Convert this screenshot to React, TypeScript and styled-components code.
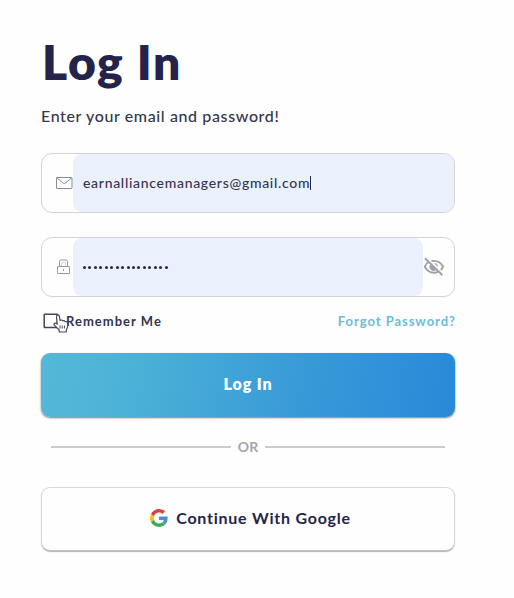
import React from "react";
import styled, { createGlobalStyle } from "styled-components";

const GlobalStyle = createGlobalStyle`
  * { box-sizing: border-box; }
  body { margin: 0; background: #fefefe; }
`;

const Page = styled.main`
  width: 514px;
  height: 598px;
  padding: 38px 59px 0 41px;
  display: flex;
  flex-direction: column;
  overflow: hidden;
  background: #fefefe;
  color: #34364c;
  font-family: Lato, "Open Sans", sans-serif;
`;

const Title = styled.h1`
  margin: 0;
  height: 54px;
  padding-left: 1px;
  font-size: 48px;
  line-height: 48px;
  font-weight: 800;
  letter-spacing: 1.5px;
  color: #24244a;
  white-space: nowrap;
`;

const Subtitle = styled.p`
  margin: 12px 0 0;
  height: 24px;
  font-size: 16px;
  line-height: 23px;
  font-weight: 500;
  letter-spacing: 0.62px;
  white-space: nowrap;
`;

const Field = styled.label<{ $top: number }>`
  flex: none;
  margin-top: ${(p) => p.$top}px;
  height: 60px;
  display: flex;
  align-items: stretch;
  border: 1px solid #d3d3da;
  border-radius: 11px;
  overflow: hidden;
  background: #fefefe;
`;

const LeadingIcon = styled.span`
  width: 31px;
  flex: none;
  display: flex;
  align-items: center;
  padding-left: 13px;
`;

const TrailingIcon = styled.span`
  width: 31px;
  flex: none;
  display: flex;
  align-items: center;
`;

const FieldValue = styled.span<{ $radius: string }>`
  flex: 1;
  display: flex;
  align-items: center;
  padding: 0 0 1px 10px;
  background: #eaf1fd;
  border-radius: ${(p) => p.$radius};
  font-size: 14px;
  font-weight: 500;
  letter-spacing: 0.7px;
  white-space: nowrap;
`;

const Caret = styled.i`
  width: 1px;
  height: 14px;
  background: #292b43;
`;

const Dots = styled.span`
  display: flex;
  gap: 2.45px;
  padding-top: 1px;
`;

const Dot = styled.i`
  width: 3px;
  height: 3px;
  border-radius: 50%;
  background: #292b43;
`;

const Options = styled.div`
  height: 26px;
  margin-top: 11px;
  display: flex;
  align-items: center;
  font-size: 13px;
  font-weight: 700;
  white-space: nowrap;
`;

const Remember = styled.label`
  position: relative;
  display: flex;
  align-items: center;
  gap: 7px;
  padding-left: 2px;
  letter-spacing: 1.02px;
`;

const CheckboxIcon = styled.svg`
  display: block;
`;

const Pointer = styled.svg`
  position: absolute;
  left: 12px;
  top: 1px;
`;

const Forgot = styled.a`
  margin-left: auto;
  margin-right: -1px;
  color: #6cbcd6;
  letter-spacing: 0.96px;
`;

const LoginButton = styled.button`
  flex: none;
  height: 64px;
  margin-top: 19px;
  padding: 0 0 3px;
  border: 0;
  border-radius: 9px;
  background: linear-gradient(100deg, #54b9d7 0%, #4bb0d7 25%, #3a9bd8 60%, #2989d9 100%);
  box-shadow: 0 1px 2px #777b8c;
  color: #fff;
  font: 800 16px Lato, sans-serif;
  letter-spacing: 0.9px;
`;

const Divider = styled.div`
  height: 20px;
  margin: 20px 10px 0;
  display: flex;
  align-items: center;
  gap: 7px;
  color: #a3a4ad;
  font-size: 14px;
  line-height: 20px;
  font-weight: 700;
  &::before,
  &::after {
    content: "";
    flex: 1;
    height: 2px;
    background: #cbcbcd;
  }
`;

const DividerText = styled.span`
  height: 20px;
`;

const GoogleButton = styled.button`
  flex: none;
  height: 64px;
  margin-top: 30px;
  padding: 0 0 3px 5px;
  display: flex;
  align-items: center;
  justify-content: center;
  gap: 8px;
  border: 1px solid #d7d7dc;
  border-bottom-color: #c3c3c5;
  border-radius: 9px;
  background: #fefefe;
  box-shadow: 0 1px 1px #b4b4b6;
  color: #24244a;
  font: 700 16px/20px Lato, sans-serif;
  letter-spacing: 0.76px;
`;

const MailIcon = () => (
  <svg width="18" height="14" viewBox="0 0 18 14" fill="none" stroke="#8a8b96">
    <rect x="1.500" y="1.500" width="15.500" height="11" rx="0.500" />
    <path d="m2 2 6.200 5.200q1 .8 2 0L16.500 2" />
  </svg>
);

const LockIcon = () => (
  <svg width="18" height="16" viewBox="0 0 18 16" fill="none" stroke="#9a9aa2">
    <rect x="2.500" y="7.500" width="12" height="7" rx="0.500" />
    <path d="M4.500 7.500V2.500q0-1.500 1.500-1.500h5q1.500 0 1.500 1.500v5M8.500 10v2" />
    <path d="M6.500 7V4.500q0-1 1-1h2q1 0 1 1V7" strokeOpacity="0.400" />
  </svg>
);

const EyeOffIcon = () => (
  <svg width="22" height="20" viewBox="0 0 22 20" fill="none" stroke="#a0a0a7" strokeWidth="1.900">
    <path d="M5.500 5Q2.500 6.600 1.800 9.700q3.300 6 9.200 6 2 0 3.800-.8M8.500 4q8-1 11.700 5.700-1 2-2.500 3.300" />
    <path d="M7.500 7.200a4 4 0 0 0 5.800 5.500z" fill="#a0a0a7" stroke="none" />
    <path d="M11.500 6.500a3.500 3.500 0 0 1 3 3" strokeWidth="1.200" />
    <path d="m2 1.300 17.500 17" />
  </svg>
);

const Checkbox = () => (
  <CheckboxIcon width="16" height="16" viewBox="0 0 16 16" fill="none">
    <rect x="1.200" y="1.200" width="13.200" height="13.200" rx="0.500" stroke="#45465a" strokeWidth="1.500" />
  </CheckboxIcon>
);

const HandPointer = () => (
  <Pointer width="16" height="19" viewBox="0 0 16 19" fill="#fefefe" stroke="#4a4b5a" strokeWidth="1.200" strokeLinejoin="round">
    <path d="M4.200 9.500 3.500 3Q3.400 1.200 4.700 1T6.400 2.500L7 6.500q1.700-1.200 2.500.3 1.900-.8 2.500.8 2.500-.5 2.600 1.700v3q0 2-1.300 3.300V18H6.200v-2L1.400 11.200q-1-1.400.2-2 1.100-.5 2.600.8Z" />
    <path d="M7 11.500v3m2.200-3v3m2.200-3v3" strokeWidth="1" />
  </Pointer>
);

const GoogleIcon = () => (
  <svg width="18" height="18" viewBox="0 0 48 48">
    <path fill="#da4147" d="M24 9.500c3.540 0 6.710 1.220 9.210 3.600l6.850-6.850C35.900 2.380 30.470 0 24 0 14.620 0 6.510 5.380 2.560 13.220l7.980 6.190C12.430 13.720 17.740 9.500 24 9.500z" />
    <path fill="#4b8fd5" d="M46.980 24.550c0-1.570-.15-3.090-.38-4.550H24v9.020h12.940c-.58 2.960-2.260 5.480-4.780 7.180l7.730 6c4.510-4.180 7.090-10.360 7.090-17.650z" />
    <path fill="#f4be20" d="M10.530 28.590A14.500 14.500 0 0 1 9.770 24c0-1.600.27-3.140.76-4.590l-7.980-6.190A23.900 23.900 0 0 0 0 24c0 3.880.92 7.540 2.560 10.780l7.970-6.190z" />
    <path fill="#3fa85b" d="M24 48c6.480 0 11.930-2.130 15.890-5.810l-7.730-6c-2.150 1.450-4.920 2.300-8.160 2.300-6.260 0-11.570-4.220-13.470-9.910l-7.980 6.190C6.510 42.620 14.620 48 24 48z" />
  </svg>
);

export default function App() {
  return (
    <>
      <GlobalStyle />
      <Page>
        <Title>Log In</Title>
        <Subtitle>Enter your email and password!</Subtitle>
        <Field $top={25}>
          <LeadingIcon><MailIcon /></LeadingIcon>
          <FieldValue $radius="9px 0 0 9px">
            earnalliancemanagers@gmail.com<Caret />
          </FieldValue>
        </Field>
        <Field $top={24}>
          <LeadingIcon><LockIcon /></LeadingIcon>
          <FieldValue $radius="9px">
            <Dots>{Array.from({ length: 16 }, (_, i) => <Dot key={i} />)}</Dots>
          </FieldValue>
          <TrailingIcon><EyeOffIcon /></TrailingIcon>
        </Field>
        <Options>
          <Remember>
            <Checkbox />
            Remember Me
            <HandPointer />
          </Remember>
          <Forgot>Forgot Password?</Forgot>
        </Options>
        <LoginButton>Log In</LoginButton>
        <Divider><DividerText>OR</DividerText></Divider>
        <GoogleButton><GoogleIcon />Continue With Google</GoogleButton>
      </Page>
    </>
  );
}
